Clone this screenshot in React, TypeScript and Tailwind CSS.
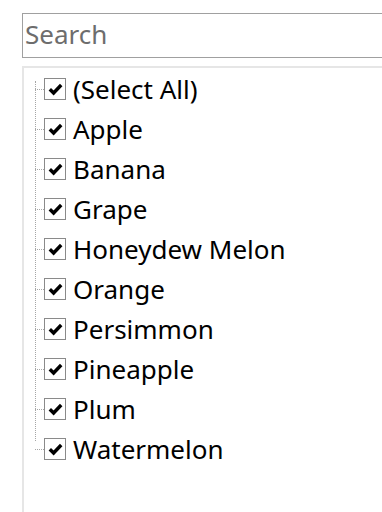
import React from 'react';

const FRUITS = ['(Select All)', 'Apple', 'Banana', 'Grape', 'Honeydew Melon', 'Orange', 'Persimmon', 'Pineapple', 'Plum', 'Watermelon'];

const CheckBox: React.FC = () => (
  <span className="w-[22px] h-[22px] border border-[#8a8a8a] bg-white flex items-center justify-center shrink-0">
    <svg width="15" height="13" viewBox="0 0 15 13">
      <path d="M1.8 6.2 L5.6 10 L13.2 2" fill="none" stroke="#000" strokeWidth="3.4" />
    </svg>
  </span>
);

export default function App() {
  return (
    <div className="w-[382px] h-[512px] bg-white overflow-hidden pt-[13px] pl-[22px]" style={{ fontFamily: '"Noto Sans", "Open Sans", sans-serif' }}>
      <div className="w-[380px] h-[45px] border border-[#a0a0a0] flex items-center pl-[2px] pb-[3px] text-[26px] text-[#6d6d6d] leading-none">
        Search
      </div>
      <div className="mt-[8px] w-[380px] h-[460px] border-l-2 border-t-2 border-[#e6e6e6] pt-[1px] pl-[10px]">
        <div className="relative">
          <div className="absolute left-[1px] top-[12px] h-[360px] border-l border-dotted border-[#a6a6a6]" />
          {FRUITS.map((f) => (
            <div key={f} className="h-[40px] flex items-center relative">
              <span className="w-[9px] border-t border-dotted border-[#a6a6a6] ml-[1px]" />
              <CheckBox />
              <span className="ml-[7px] text-[26px] text-black leading-none">{f}</span>
            </div>
          ))}
        </div>
      </div>
    </div>
  );
}
